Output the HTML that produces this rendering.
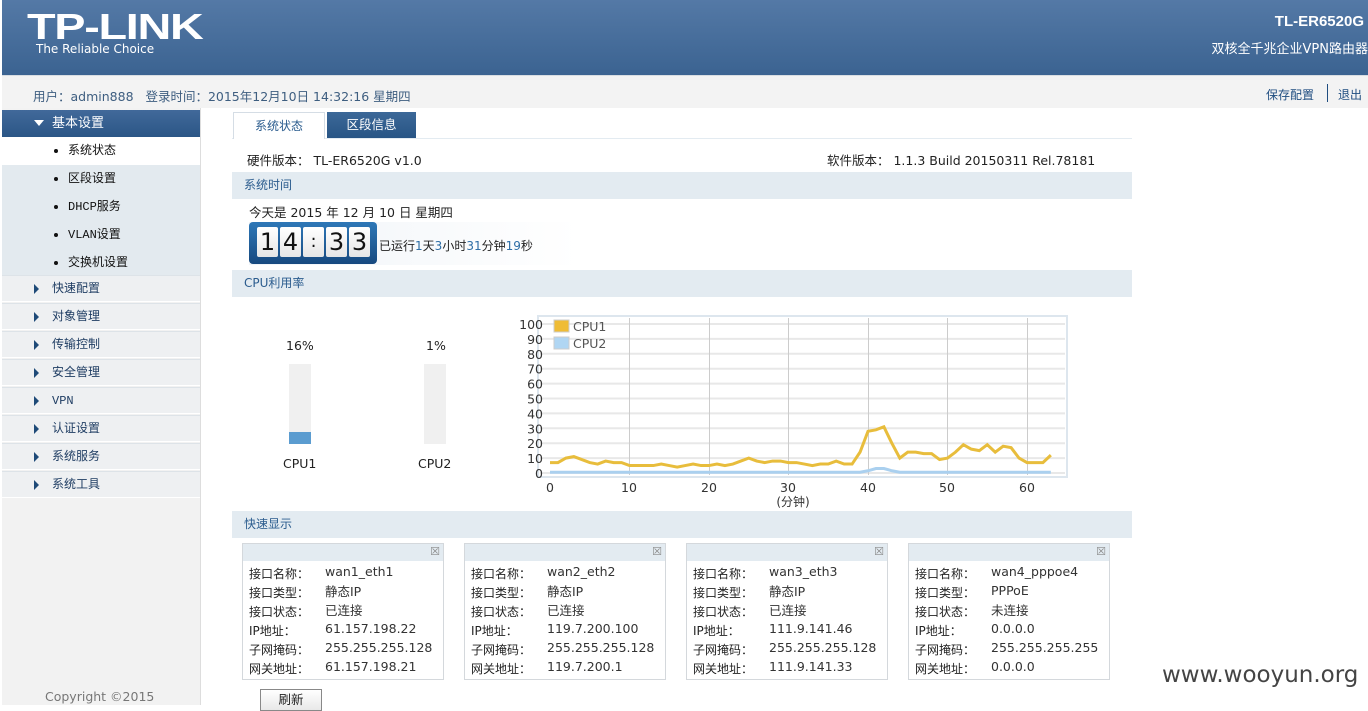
<!DOCTYPE html>
<html><head><meta charset="utf-8"><style>
*{margin:0;padding:0;box-sizing:border-box}
body{width:1368px;height:705px;overflow:hidden;background:#fff;font-family:"DejaVu Sans","Noto Sans CJK SC",sans-serif;font-size:12px;color:#222;position:relative}
.a{position:absolute;white-space:nowrap}
#hdr{left:2px;top:0;width:1366px;height:75px;background:linear-gradient(#5479a6,#3b6391)}
#sub{left:2px;top:75px;width:1366px;height:33px;background:#f3f3f3;border-top:1px solid #d8dde2}
#side{left:2px;top:108px;width:199px;height:597px;background:#f2f2f2;border-right:1px solid #ddd}
.mi{position:absolute;left:2px;width:198px;height:27px;background:#eef0f2;border-bottom:1px solid #fff;border-top:1px solid #dde3e8;font-size:12px;color:#1f3d63;line-height:26px;padding-left:50px;font-family:"Liberation Mono","Noto Sans CJK SC",monospace}
.mi:before{content:"";position:absolute;left:32px;top:8px;border-left:5px solid #1e4a78;border-top:5px solid transparent;border-bottom:5px solid transparent}
.si{position:absolute;left:2px;width:198px;height:28px;background:#e3eaef;line-height:28px;padding-left:66px;font-size:12px;color:#111;font-family:"Liberation Mono","Noto Sans CJK SC",monospace}
.si:before{content:"";position:absolute;left:52px;top:12px;width:4px;height:4px;border-radius:2px;background:#111}
.bar{position:absolute;left:232px;width:900px;height:27px;background:#e3ebf1;color:#2b5c8e;line-height:27px;padding-left:12px;font-size:12px}
.card{position:absolute;top:543px;width:202px;height:137px;border:1px solid #d4d8dc;background:#fff}
.card .h{height:17px;background:#e3ebf1;position:relative}
.card .h:after{content:"☒";position:absolute;right:3px;top:0;font-size:11px;color:#888;line-height:16px}
.card table{margin:3px 0 0 6px;border-collapse:collapse;font-size:12px}
.card td{height:19px;padding:0;vertical-align:middle}
.card td.l{width:76px}
.card td.v{color:#333;font-size:12.5px;position:relative;top:-2px}
.dg{position:absolute;top:5px;width:21px;height:30px;background:linear-gradient(#fff,#e6e6e6);color:#111;font-size:24px;text-align:center;line-height:30px;border-radius:2px}
.n{color:#2e6ea6}
</style></head><body>
<div class="a" id="hdr"></div>
<div class="a" style="left:27px;top:6px;font:bold 36px 'Liberation Sans',sans-serif;color:#fff;letter-spacing:-1px;transform:scaleX(1.3);transform-origin:left">TP-LINK</div>
<div class="a" style="left:36px;top:42px;font-size:12px;color:#fff">The Reliable Choice</div>
<div class="a" style="right:4px;top:13px;font:bold 15px 'Liberation Sans',sans-serif;color:#fff">TL-ER6520G</div>
<div class="a" style="right:0;top:38px;font-size:13px;color:#fff">双核全千兆企业VPN路由器</div>
<div class="a" id="sub"></div>
<div class="a" style="left:33px;top:86px;font-size:12.5px;color:#3e5e80">用户：admin888 &nbsp; 登录时间：2015年12月10日 14:32:16 星期四</div>
<div class="a" style="left:1266px;top:86px;font-size:12px;color:#1f4d80">保存配置</div>
<div class="a" style="left:1327px;top:84px;width:1px;height:18px;background:#1f4d80"></div>
<div class="a" style="left:1338px;top:86px;font-size:12px;color:#1f4d80">退出</div>
<div class="a" id="side"></div>
<div class="a" style="left:2px;top:110px;width:198px;height:27px;background:linear-gradient(#41699a,#2b5686);color:#fff;line-height:27px;padding-left:50px;font-size:13px">基本设置</div>
<div class="a" style="left:34px;top:120px;border-top:6px solid #fff;border-left:5px solid transparent;border-right:5px solid transparent"></div>
<div class="si" style="top:137px;background:#fff">系统状态</div>
<div class="si" style="top:165px">区段设置</div>
<div class="si" style="top:193px">DHCP服务</div>
<div class="si" style="top:221px">VLAN设置</div>
<div class="si" style="top:249px">交换机设置</div>
<div class="mi" style="top:275px">快速配置</div>
<div class="mi" style="top:303px">对象管理</div>
<div class="mi" style="top:331px">传输控制</div>
<div class="mi" style="top:359px">安全管理</div>
<div class="mi" style="top:387px">VPN</div>
<div class="mi" style="top:415px">认证设置</div>
<div class="mi" style="top:443px">系统服务</div>
<div class="mi" style="top:471px">系统工具</div>
<div class="a" style="left:45px;top:689px;font-size:12.5px;color:#777">Copyright ©2015</div>

<div class="a" style="left:232px;top:138px;width:900px;height:1px;background:#e3ebf1"></div>
<div class="a" style="left:233px;top:112px;width:92px;height:27px;background:#fff;border:1px solid #d5dde5;border-bottom:none;color:#2b5c8e;text-align:center;line-height:26px;font-size:12px">系统状态</div>
<div class="a" style="left:327px;top:112px;width:89px;height:26px;background:linear-gradient(#3c6898,#285585);color:#fff;text-align:center;line-height:26px;font-size:12.5px">区段信息</div>
<div class="a" style="left:247px;top:150px;font-size:12.5px">硬件版本： TL-ER6520G v1.0</div>
<div class="a" style="left:827px;top:150px;font-size:12.5px">软件版本： 1.1.3 Build 20150311 Rel.78181</div>
<div class="bar" style="top:172px">系统时间</div>
<div class="a" style="left:249px;top:202px;font-size:12.5px">今天是 2015 年 12 月 10 日 星期四</div>
<div class="a" style="left:249px;top:222px;width:330px;height:43px;background:linear-gradient(90deg,#f0f4f8,#fff)"></div>
<div class="a" style="left:249px;top:222px;width:128px;height:42px;background:linear-gradient(#2e78b8,#17497f);border-radius:4px"></div>
<div class="dg" style="left:257px;top:227px">1</div>
<div class="dg" style="left:280px;top:227px">4</div>
<div class="dg" style="left:303px;top:227px;font-size:18px">:</div>
<div class="dg" style="left:326px;top:227px">3</div>
<div class="dg" style="left:349px;top:227px">3</div>
<div class="a" style="left:379px;top:237px;font-size:12px">已运行<span class="n">1</span>天<span class="n">3</span>小时<span class="n">31</span>分钟<span class="n">19</span>秒</div>
<div class="bar" style="top:270px">CPU利用率</div>
<div class="a" style="left:286px;top:338px;font-size:12.5px">16%</div>
<div class="a" style="left:289px;top:364px;width:22px;height:80px;background:#f0f0f0"></div>
<div class="a" style="left:289px;top:432px;width:22px;height:12px;background:#5b9cd0"></div>
<div class="a" style="left:283px;top:456px;font-size:12.5px">CPU1</div>
<div class="a" style="left:426px;top:338px;font-size:12.5px">1%</div>
<div class="a" style="left:424px;top:364px;width:22px;height:80px;background:#f0f0f0"></div>
<div class="a" style="left:418px;top:456px;font-size:12.5px">CPU2</div>
<svg class="a" style="left:500px;top:310px" width="580" height="200" viewBox="500 310 580 200" font-family="DejaVu Sans,sans-serif" font-size="12.5">
<rect x="538" y="316" width="529" height="161" fill="#fff" stroke="#dde6ee" stroke-width="2"/>
<g stroke="#e8e8e8" stroke-width="2" id="hg"></g>
<g stroke="#ccc" stroke-width="1"><line x1="629.5" y1="318" x2="629.5" y2="475"/><line x1="709.5" y1="318" x2="709.5" y2="475"/><line x1="788.5" y1="318" x2="788.5" y2="475"/><line x1="868.5" y1="318" x2="868.5" y2="475"/><line x1="947.5" y1="318" x2="947.5" y2="475"/><line x1="1027.5" y1="318" x2="1027.5" y2="475"/></g>
<g fill="#333" text-anchor="end" id="yl"></g>
<g fill="#333" text-anchor="middle"><text x="550" y="492">0</text><text x="629" y="492">10</text><text x="709" y="492">20</text><text x="788" y="492">30</text><text x="868" y="492">40</text><text x="947" y="492">50</text><text x="1027" y="492">60</text><text x="793" y="506" font-family="DejaVu Sans,Noto Sans CJK SC,sans-serif" font-size="12">(分钟)</text></g>
<polyline id="c2" fill="none" stroke="#aad0ef" stroke-width="3"/>
<polyline id="c1" fill="none" stroke="#e8bd3c" stroke-width="3"/>
<rect x="554" y="320" width="15" height="12" fill="#efbc35" stroke="#ccc"/><text x="573" y="331" fill="#555">CPU1</text>
<rect x="554" y="337" width="15" height="12" fill="#b0d6f3" stroke="#ccc"/><text x="573" y="348" fill="#555">CPU2</text>
</svg>
<div class="bar" style="top:511px">快速显示</div>
<div class="card" style="left:242px"><div class="h"></div><table>
<tr><td class="l">接口名称：</td><td class="v">wan1_eth1</td></tr><tr><td class="l">接口类型：</td><td class="v">静态IP</td></tr><tr><td class="l">接口状态：</td><td class="v">已连接</td></tr><tr><td class="l">IP地址：</td><td class="v">61.157.198.22</td></tr><tr><td class="l">子网掩码：</td><td class="v">255.255.255.128</td></tr><tr><td class="l">网关地址：</td><td class="v">61.157.198.21</td></tr></table></div>
<div class="card" style="left:464px"><div class="h"></div><table>
<tr><td class="l">接口名称：</td><td class="v">wan2_eth2</td></tr><tr><td class="l">接口类型：</td><td class="v">静态IP</td></tr><tr><td class="l">接口状态：</td><td class="v">已连接</td></tr><tr><td class="l">IP地址：</td><td class="v">119.7.200.100</td></tr><tr><td class="l">子网掩码：</td><td class="v">255.255.255.128</td></tr><tr><td class="l">网关地址：</td><td class="v">119.7.200.1</td></tr></table></div>
<div class="card" style="left:686px"><div class="h"></div><table>
<tr><td class="l">接口名称：</td><td class="v">wan3_eth3</td></tr><tr><td class="l">接口类型：</td><td class="v">静态IP</td></tr><tr><td class="l">接口状态：</td><td class="v">已连接</td></tr><tr><td class="l">IP地址：</td><td class="v">111.9.141.46</td></tr><tr><td class="l">子网掩码：</td><td class="v">255.255.255.128</td></tr><tr><td class="l">网关地址：</td><td class="v">111.9.141.33</td></tr></table></div>
<div class="card" style="left:908px"><div class="h"></div><table>
<tr><td class="l">接口名称：</td><td class="v">wan4_pppoe4</td></tr><tr><td class="l">接口类型：</td><td class="v">PPPoE</td></tr><tr><td class="l">接口状态：</td><td class="v">未连接</td></tr><tr><td class="l">IP地址：</td><td class="v">0.0.0.0</td></tr><tr><td class="l">子网掩码：</td><td class="v">255.255.255.255</td></tr><tr><td class="l">网关地址：</td><td class="v">0.0.0.0</td></tr></table></div>
<div class="a" style="left:260px;top:689px;width:62px;height:22px;border:1px solid #888;background:linear-gradient(#fff,#e8e8e8);text-align:center;line-height:20px;font-size:12.5px">刷新</div>
<div class="a" style="left:1162px;top:662px;font-size:23px;color:#444">www.wooyun.org</div>
<script>
var ns="http://www.w3.org/2000/svg",hg=document.getElementById('hg'),yl=document.getElementById('yl');
for(var v=0;v<=100;v+=10){var y=473-1.49*v;var l=document.createElementNS(ns,'line');l.setAttribute('x1',540);l.setAttribute('x2',1065);l.setAttribute('y1',y);l.setAttribute('y2',y);hg.appendChild(l);var t=document.createElementNS(ns,'text');t.setAttribute('x',543);t.setAttribute('y',y+5);t.textContent=v;yl.appendChild(t);}
var d=[7,7,10,11,9,7,6,8,7,7,5,5,5,5,6,5,4,5,6,5,5,6,5,6,8,10,8,7,8,8,7,7,6,5,6,6,8,6,6,7,14,28,29,31,20,10,14,14,13,13,9,10,14,19,16,15,19,14,18,17,10,7,7,7,12];
d.splice(39,1);
var p1=[],p2=[];for(var i=0;i<d.length;i++){var x=550+7.95*i;p1.push(x+','+(473-1.49*d[i]));var c=(i>=40&&i<=43)?(i==41||i==42?3:1.5):0.5;p2.push(x+','+(473-1.49*c));}
document.getElementById('c1').setAttribute('points',p1.join(' '));document.getElementById('c2').setAttribute('points',p2.join(' '));
</script>
</body></html>
